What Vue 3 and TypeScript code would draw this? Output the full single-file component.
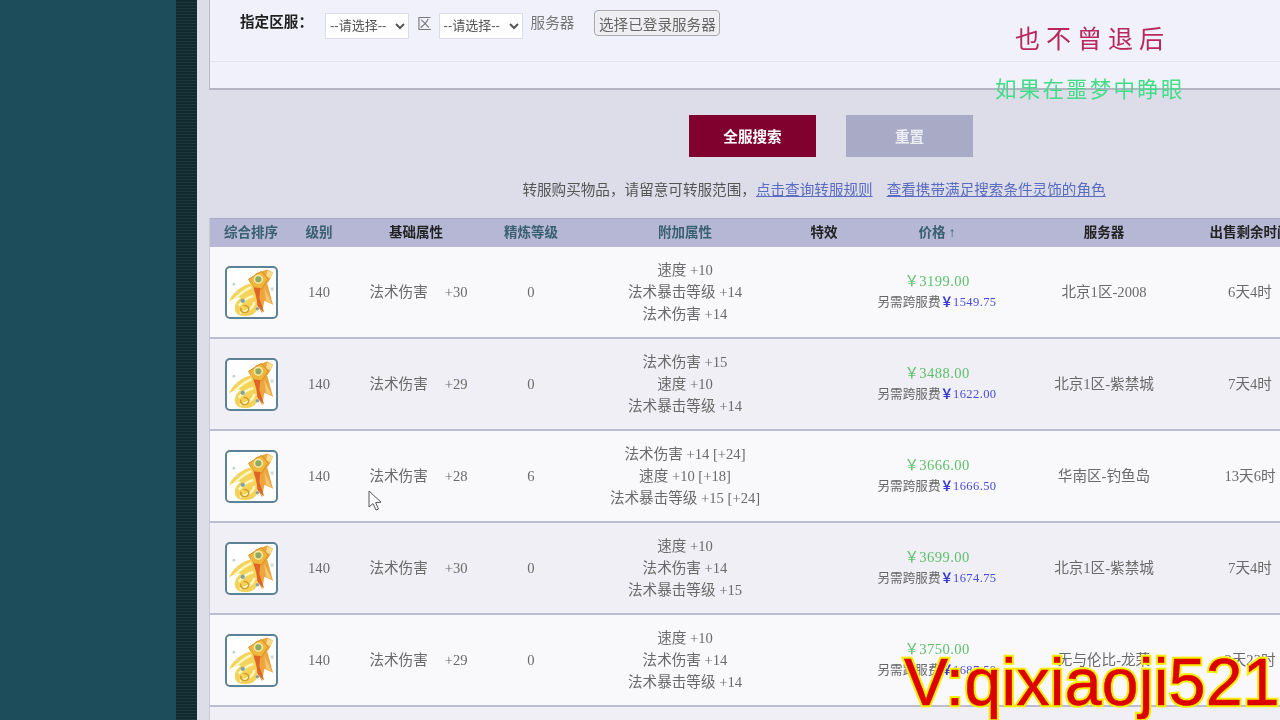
<script setup lang="ts">
interface Row {
  base: string
  refine: string
  extras: string[]
  price: string
  fee: string
  server: string
  time: string
}

const headers = [
  { label: '综合排序', dark: false },
  { label: '级别', dark: false },
  { label: '基础属性', dark: true },
  { label: '精炼等级', dark: false },
  { label: '附加属性', dark: false },
  { label: '特效', dark: true },
  { label: '价格 ↑', dark: false },
  { label: '服务器', dark: true },
  { label: '出售剩余时间', dark: true },
]

const rows: Row[] = [
  { base: '+30', refine: '0', extras: ['速度 +10', '法术暴击等级 +14', '法术伤害 +14'], price: '3199.00', fee: '1549.75', server: '北京1区-2008', time: '6天4时' },
  { base: '+29', refine: '0', extras: ['法术伤害 +15', '速度 +10', '法术暴击等级 +14'], price: '3488.00', fee: '1622.00', server: '北京1区-紫禁城', time: '7天4时' },
  { base: '+28', refine: '6', extras: ['法术伤害 +14 [+24]', '速度 +10 [+18]', '法术暴击等级 +15 [+24]'], price: '3666.00', fee: '1666.50', server: '华南区-钓鱼岛', time: '13天6时' },
  { base: '+30', refine: '0', extras: ['速度 +10', '法术伤害 +14', '法术暴击等级 +15'], price: '3699.00', fee: '1674.75', server: '北京1区-紫禁城', time: '7天4时' },
  { base: '+29', refine: '0', extras: ['速度 +10', '法术伤害 +14', '法术暴击等级 +14'], price: '3750.00', fee: '1687.50', server: '无与伦比-龙荣', time: '2天23时' },
]
</script>

<template>
  <div class="page">
    <aside class="side"></aside>
    <div class="strip"></div>
    <main class="main">
      <div class="content">
        <section class="panel">
          <div class="form-row">
            <strong class="form-label">指定区服：</strong>
            <select class="sel"><option>--请选择--</option></select>
            <span class="unit">区</span>
            <select class="sel"><option>--请选择--</option></select>
            <span class="unit server-unit">服务器</span>
            <button class="pick" type="button">选择已登录服务器</button>
          </div>
          <div class="rule"></div>
        </section>

        <div class="actions">
          <button class="act primary" type="button">全服搜索</button>
          <button class="act muted" type="button">重置</button>
        </div>

        <p class="notice">
          转服购买物品，请留意可转服范围，<a class="lnk">点击查询转服规则</a><a class="lnk second">查看携带满足搜索条件灵饰的角色</a>
        </p>

        <div class="table">
          <div class="grid head">
            <div v-for="h in headers" :key="h.label" class="th" :class="{ dark: h.dark }">{{ h.label }}</div>
          </div>
          <div v-for="(r, i) in rows" :key="i" class="grid row">
            <div class="cell">
              <span class="thumb">
                <svg viewBox="0 0 50 50" width="50" height="50">
                  <path d="M29 5 L41 1 L47 4 L44 11 L41 15 L47 37 L38 33 L36 46 L30 36 L26 24 Z" fill="#eea63c" />
                  <path d="M41 2 L47 4 L44 10 L40 8 Z" fill="#f7dc8a" />
                  <path d="M22 11 L35 3 L42 11 L35 21 L27 19 Z" fill="#efb63c" stroke="#d98a24" stroke-width="1" />
                  <circle cx="32" cy="11" r="4" fill="#8fa866" stroke="#f8eaa0" stroke-width="1.6" />
                  <path d="M27 20 L34 20 L33 30 L38 45 L31 38 L27 29 Z" fill="#e0642a" />
                  <path d="M38 20 L46 36 L40 33 Z" fill="#f4c878" />
                  <path d="M25 15 C15 17 5 25 2 34 C7 30 11 29 14 30 C7 35 6 43 11 47 C19 51 31 48 31 39 C31 30 28 22 25 15 Z" fill="#f3d35a" />
                  <path d="M8 31 C14 25 20 21 25 19 M12 38 C17 32 22 29 27 28 M13 45 C20 44 27 41 28 34" stroke="#fdf6bf" stroke-width="2.6" fill="none" />
                  <path d="M14 40 C13 45 18 46 21 44 C24 41 21 37 17 38" stroke="#d59c28" stroke-width="1.5" fill="none" />
                  <circle cx="16" cy="33" r="2.2" fill="#7d9fa8" />
                  <circle cx="31" cy="41" r="1.8" fill="#86a5ad" />
                  <circle cx="7" cy="16" r="1.4" fill="#bcd0d4" />
                  <circle cx="46" cy="21" r="1.8" fill="#cfdcdc" />
                  <circle cx="10" cy="24" r="1" fill="#cfdcdc" />
                </svg>
              </span>
            </div>
            <div class="cell">140</div>
            <div class="cell base"><span>法术伤害</span><span>{{ r.base }}</span></div>
            <div class="cell">{{ r.refine }}</div>
            <div class="cell extras"><div v-for="e in r.extras" :key="e" class="extra">{{ e }}</div></div>
            <div class="cell"></div>
            <div class="cell price">
              <div class="amount">￥{{ r.price }}</div>
              <div class="fee">另需跨服费<b class="yen">￥</b><span class="fee-num">{{ r.fee }}</span></div>
            </div>
            <div class="cell">{{ r.server }}</div>
            <div class="cell">{{ r.time }}</div>
          </div>
          <div class="grid row"></div>
        </div>
      </div>
    </main>

    <div class="lyric lyric-top">也不曾退后</div>
    <div class="lyric lyric-bottom">如果在噩梦中睁眼</div>

    <svg class="cursor" width="16" height="22" viewBox="0 0 16 22">
      <path d="M1 1 L1 17 L5 13.5 L8 20 L10.5 19 L7.6 12.6 L13 12.2 Z" fill="#fff" stroke="#555" stroke-width="1" />
    </svg>

    <div class="mark">V:qixiaoji521</div>
  </div>
</template>

<style>
html, body { margin: 0; background: #dcdde8; }
</style>

<style scoped>
.page {
  position: relative;
  display: flex;
  width: 1280px;
  height: 720px;
  overflow: hidden;
  font-family: "Liberation Serif", "Noto Sans CJK SC", serif;
  font-size: 14.6px;
  line-height: 22px;
  color: #6a6a6a;
  filter: blur(0.3px);
}
.side { width: 176px; flex: none; background: #1d4c5b; }
.strip {
  width: 21px;
  flex: none;
  background: repeating-linear-gradient(180deg, #10282e 0, #10282e 2px, #1a3a40 2px, #1a3a40 3px);
}
.main { flex: 1; min-width: 0; background: #dcdde8; padding-left: 13px; overflow: hidden; }
.content { width: 1242px; }
.panel {
  height: 90px;
  padding-top: 10px;
  box-sizing: border-box;
  background: #f0f1fa;
  border-left: 1px solid #b9bac8;
  margin-left: -1px;
  border-bottom: 2px solid #b3b4c4;
}
.form-row { display: flex; align-items: center; height: 28px; padding-left: 30px; }
.form-label { color: #222; font-size: 14.6px; width: 85px; flex: none; margin-bottom: 4px; }
.sel {
  width: 84px;
  height: 26px;
  margin-top: 3px;
  background: #fff;
  border: 1px solid #dcdde6;
  font: 13px "Liberation Sans", "Noto Sans CJK SC", sans-serif;
  color: #555;
}
.unit { margin: 0 7px 1px 8px; color: #777; }
.server-unit { margin-right: 20px; margin-bottom: 2px; }
.pick {
  width: 126px;
  height: 26px;
  padding: 0;
  margin-bottom: 2px;
  border: 1px solid #aaa;
  border-radius: 4px;
  background: #efeff3;
  font: 14.6px "Noto Sans CJK SC", sans-serif;
  color: #666;
}
.rule { height: 1px; margin-top: 23px; background: #e2e3ec; }
.actions { display: flex; justify-content: center; gap: 30px; margin-top: 25px; }
.act {
  width: 127px;
  height: 42px;
  border: 0;
  padding: 0 0 2px;
  font: bold 14.6px "Noto Sans CJK SC", sans-serif;
  color: #fff;
}
.primary { background: #80002e; }
.muted { background: #a9aac6; color: #eceef4; }
.notice { margin: 23px 34px 0 0; text-align: center; line-height: 20px; color: #555; }
.lnk { color: #5a6cc0; text-decoration: underline; }
.second { margin-left: 14px; }
.table { margin-top: 18px; margin-left: -1px; border-left: 1px solid #c8c9d6; }
.grid { display: grid; grid-template-columns: 82px 54px 140px 90px 218px 60px 166px 168px 124px; }
.head { height: 29px; background: #b6b7d5; align-items: center; border-top: 1px solid #a9aac8; box-sizing: border-box; }
.th { text-align: center; font-weight: bold; font-size: 13.5px; color: #39606f; }
.th.dark { color: #222; }
.row { height: 92px; box-sizing: border-box; background: #f9f9fc; border-bottom: 2px solid #bcbdd0; }
.row:nth-child(odd) { background: #efeff5; }
.cell { display: flex; align-items: center; justify-content: center; min-width: 0; white-space: nowrap; }
.thumb {
  display: flex;
  align-items: center;
  justify-content: center;
  width: 49px;
  height: 49px;
  margin-top: 1px;
  border: 2px solid #5d8296;
  border-radius: 5px;
  background: #fff;
  overflow: hidden;
}
.base { gap: 17px; padding-left: 5px; }
.extras, .price { flex-direction: column; }
.amount { color: #5cc06a; line-height: 21px; letter-spacing: 0.4px; }
.fee { font-size: 12.6px; line-height: 21px; color: #666; }
.yen { color: #3a3ad8; font-weight: bold; }
.fee-num { color: #4a4ade; font-size: 12.5px; letter-spacing: 0.4px; }
.lyric { position: absolute; white-space: nowrap; font-family: "Noto Sans CJK SC", sans-serif; }
.lyric-top { left: 1015px; top: 20px; font-size: 25px; line-height: 34px; letter-spacing: 6px; color: #b8285c; }
.lyric-bottom { left: 995px; top: 72px; font-size: 21.5px; line-height: 32px; letter-spacing: 2.2px; color: #45dc88; }
.cursor { position: absolute; left: 368px; top: 490px; }
.mark {
  position: absolute;
  left: 904px;
  top: 645px;
  isolation: isolate;
  font: 66px/74px "Liberation Sans", sans-serif;
  letter-spacing: 0.3px;
  white-space: nowrap;
  color: #dc0000;
  -webkit-text-stroke: 0.5px #dc0000;
}
.mark::before {
  content: "V:qixiaoji521";
  position: absolute;
  left: 0;
  top: 0;
  z-index: -1;
  color: #f5ee00;
  -webkit-text-stroke: 4.5px #f5ee00;
}
</style>
